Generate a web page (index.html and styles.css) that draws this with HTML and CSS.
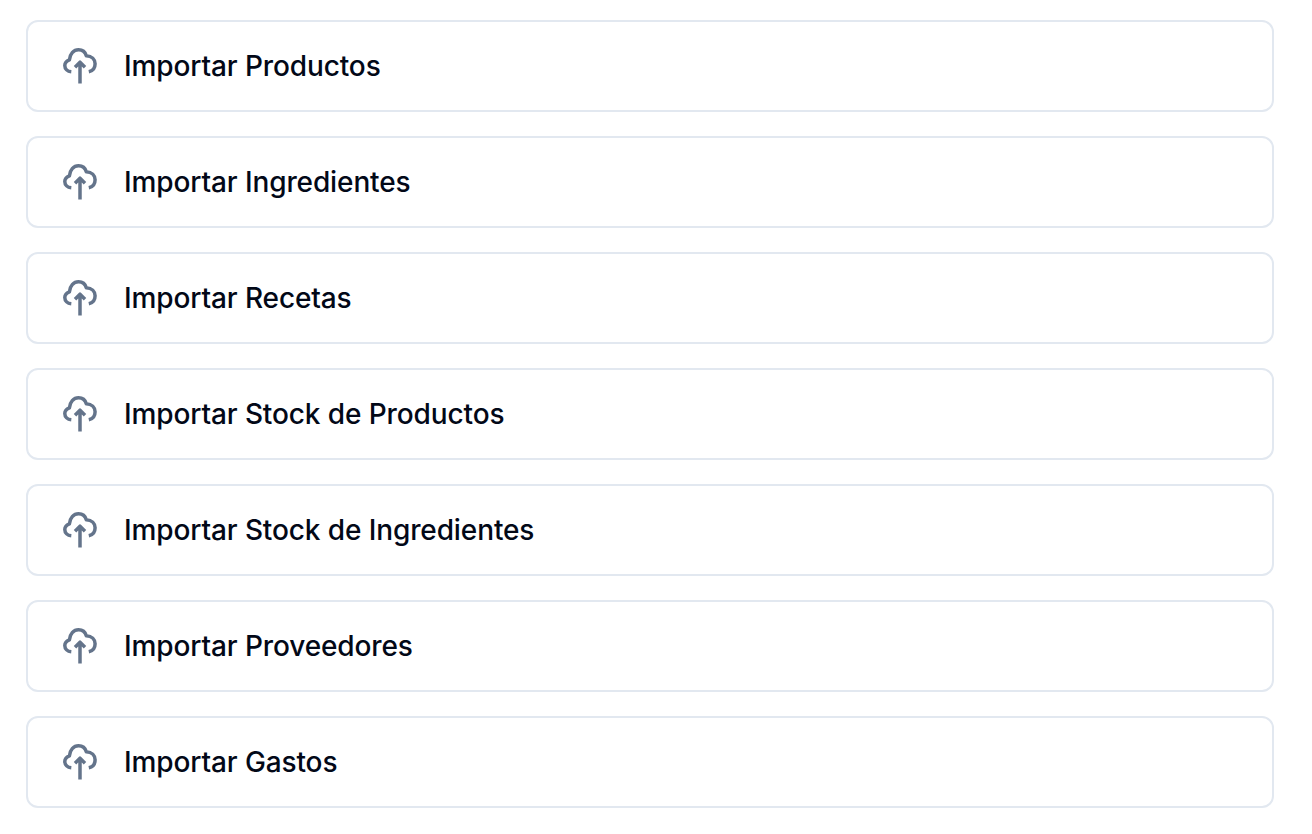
FILE: index.html
```
<!DOCTYPE html>
<html lang="es">
<head>
  <meta charset="UTF-8">
  <meta name="viewport" content="width=device-width, initial-scale=1.0">
  <title>Importar</title>
  <link rel="stylesheet" href="styles.css">
</head>
<body>

<!-- Icono compartido -->
<svg class="sprite">
  <symbol id="upload" viewBox="0 0 40 40">
    <path d="M11.3 25.8C7.4 25.4 4.8 22.8 4.8 19.4C4.8 16.8 6.8 14.8 9.4 13.8C9.8 8 13.6 3.7 18.5 3.7C22.4 3.7 25.3 6 26.3 9.7C31.8 10 35.1 13.4 35.1 17.8C35.1 21.9 32.6 25 28.8 25.8"/>
    <path d="M20 37.6V17M15 21.2L20 16.2L25 21.2"/>
  </symbol>
</svg>

<main class="imports">
  <button class="item"><svg class="icon"><use href="#upload"/></svg>Importar Productos</button>
  <button class="item"><svg class="icon"><use href="#upload"/></svg>Importar Ingredientes</button>
  <button class="item"><svg class="icon"><use href="#upload"/></svg>Importar Recetas</button>
  <button class="item"><svg class="icon"><use href="#upload"/></svg>Importar Stock de Productos</button>
  <button class="item"><svg class="icon"><use href="#upload"/></svg>Importar Stock de Ingredientes</button>
  <button class="item"><svg class="icon"><use href="#upload"/></svg>Importar Proveedores</button>
  <button class="item"><svg class="icon"><use href="#upload"/></svg>Importar Gastos</button>
</main>

</body>
</html>
```

FILE: styles.css
```
body {
  margin: 0;
  background: #fff;
  font-family: Inter, sans-serif;
}

.sprite {
  display: none;
}

.imports {
  display: flex;
  flex-direction: column;
  gap: 24px;
  padding: 20px 38px 26px 26px;
}

.item {
  display: flex;
  align-items: center;
  gap: 24px;
  height: 92px;
  padding: 0 32px;
  border: 2px solid #e2e8f0;
  border-radius: 12px;
  background: #fff;
  color: #020817;
  font-family: inherit;
  font-size: 28px;
  font-weight: 540;
  letter-spacing: -0.11px;
}

.icon {
  width: 40px;
  height: 40px;
  fill: none;
  stroke: #64748b;
  stroke-width: 3.5;
  stroke-linejoin: round;
}
```
